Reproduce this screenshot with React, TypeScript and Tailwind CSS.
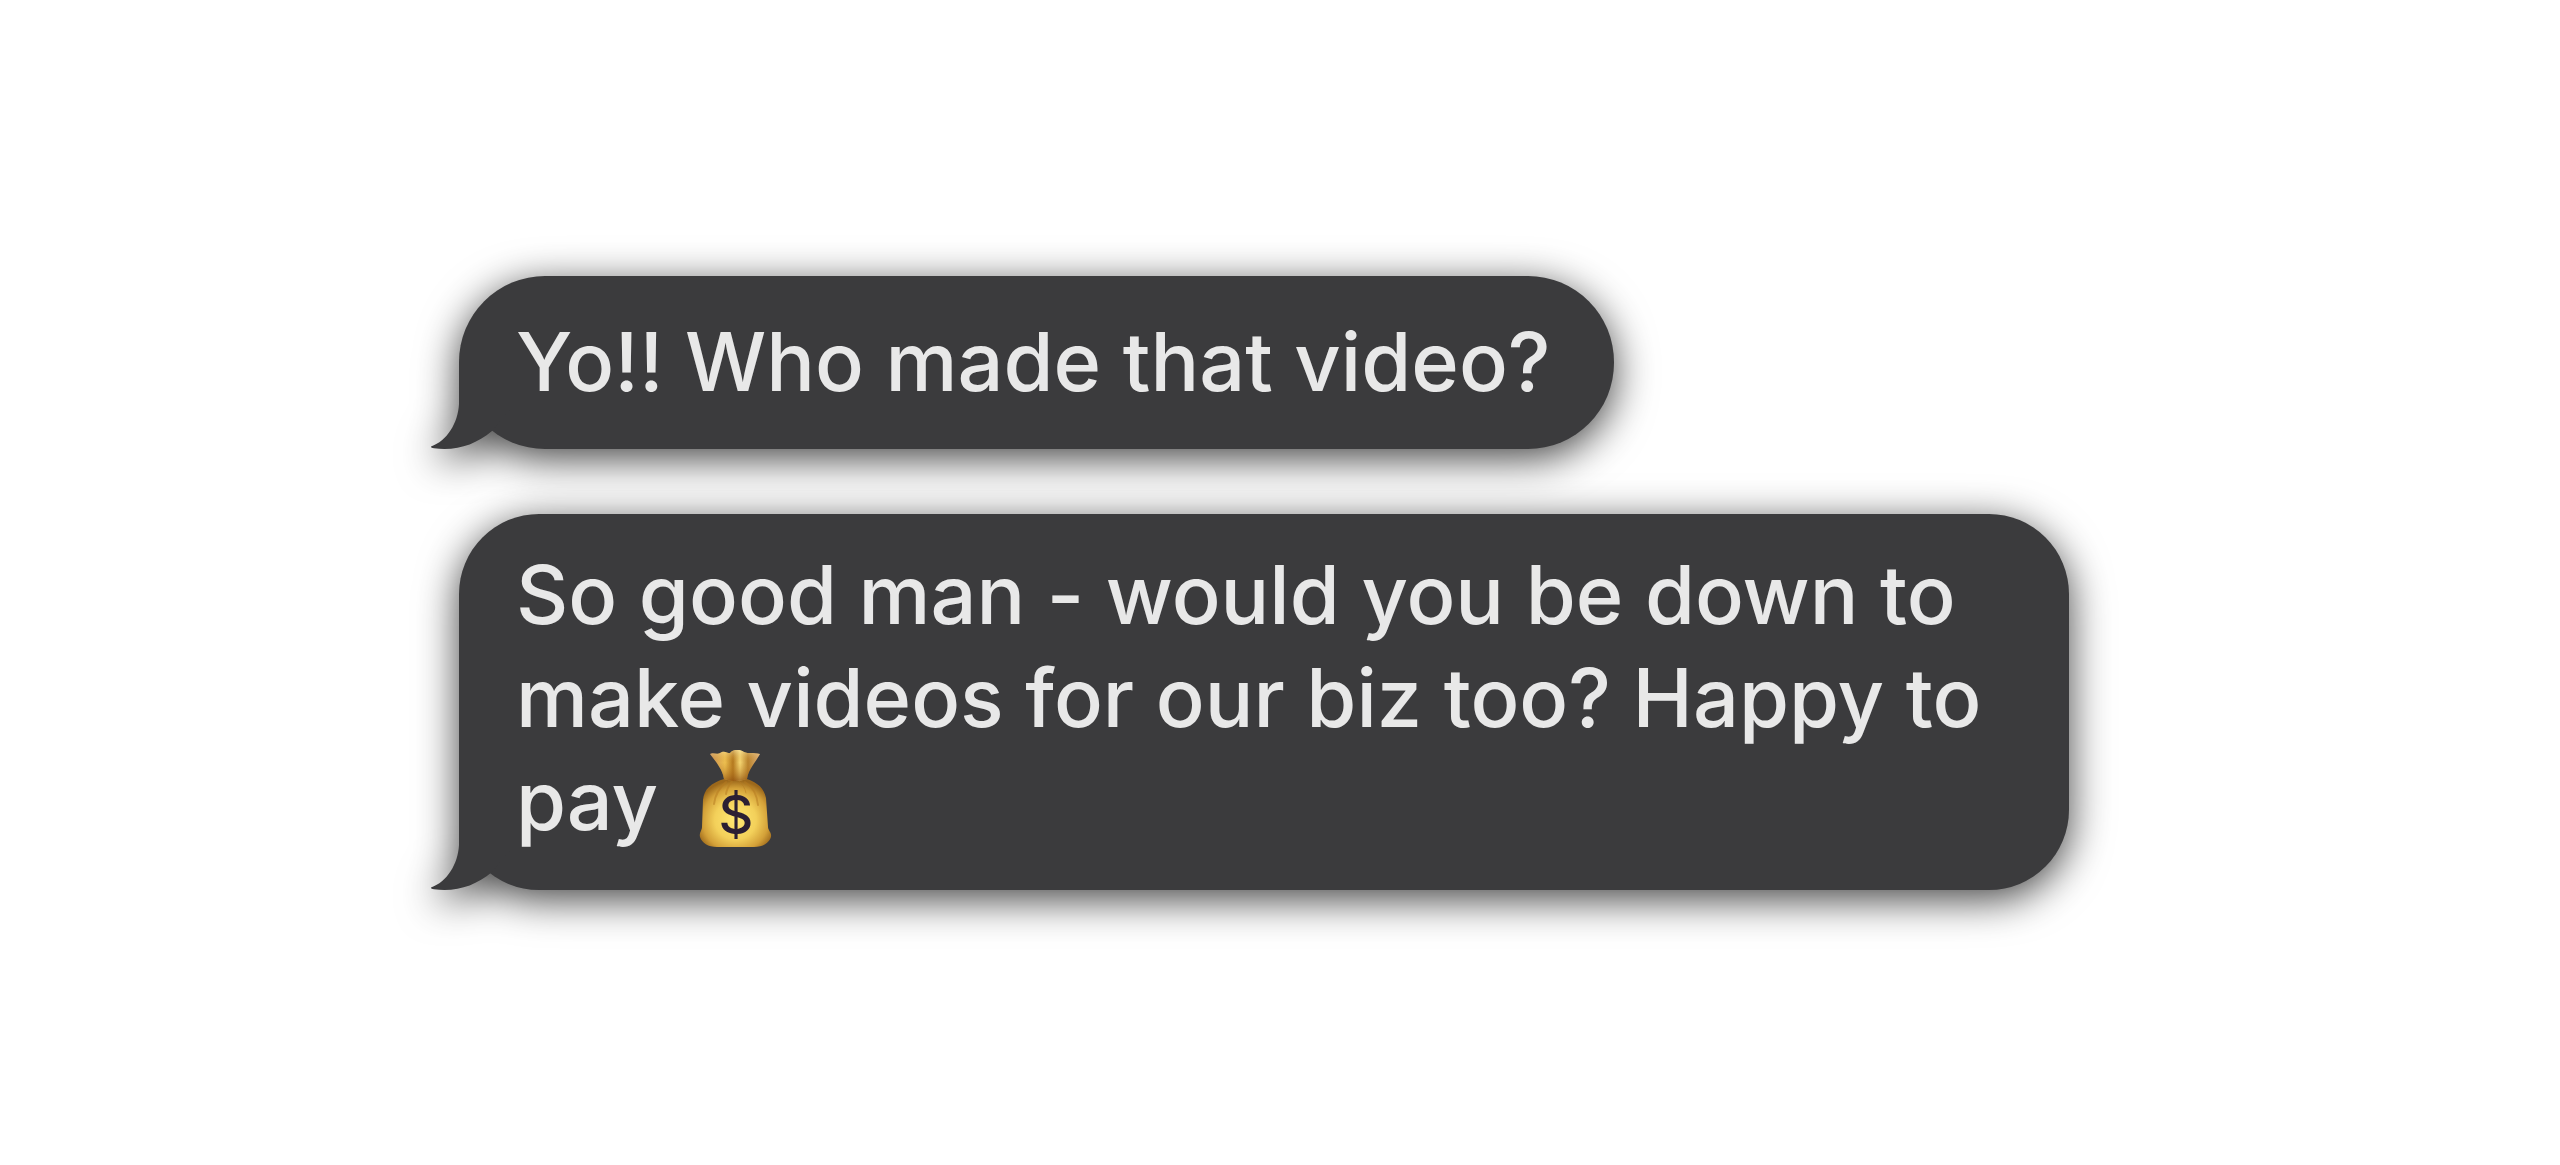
import clsx from "clsx";

type Message = {
    id: number;
    lines: string[];
    money?: boolean;
    className: string;
}

const MESSAGES: Message[] = [
    {
        id: 1,
        lines: ["Yo!! Who made that video?"],
        className: "w-[1155px] rounded-[86px] pt-[35px] pb-[35px]",
    },
    {
        id: 2,
        lines: ["So good man - would you be down to", "make videos for our biz too? Happy to", "pay"],
        money: true,
        className: "w-[1610px] rounded-[80px] pt-[30px] pb-[37px]",
    },
]

const Tail = () => {
    return (
        <svg
            viewBox="0 0 80 86"
            className="absolute bottom-0 -left-[29px] h-[86px] w-[80px] fill-[#3b3b3d]"
            aria-hidden="true"
        >
            <path d="M29 0 V41 C28 60 17 78 1 83.500 C1 84.500 2 85 4 85.300 C27 88 45 82 62 68 L80 46 V0 Z" />
        </svg>
    )
}

const MoneyBag = () => {
    return (
        <svg viewBox="0 0 73 97" className="ml-[41px] inline-block h-[97px] w-[73px] align-[-17px]" role="img" aria-label="Money bag">
            <defs>
                <radialGradient id="bag" cx="0.5" cy="0.6" r="0.58">
                    <stop offset="0" stopColor="#ffe873" />
                    <stop offset="0.5" stopColor="#f3d05a" />
                    <stop offset="0.8" stopColor="#d3a038" />
                    <stop offset="1" stopColor="#9c681b" />
                </radialGradient>
                <linearGradient id="ruffle" x1="0" x2="1" y1="0" y2="0">
                    <stop offset="0" stopColor="#c48a50" />
                    <stop offset="0.3" stopColor="#edbf50" />
                    <stop offset="0.46" stopColor="#b3781e" />
                    <stop offset="0.6" stopColor="#f5d672" />
                    <stop offset="0.76" stopColor="#b8822c" />
                    <stop offset="1" stopColor="#e0b078" />
                </linearGradient>
                <linearGradient id="shade" x1="0" x2="0" y1="0" y2="1">
                    <stop offset="0" stopColor="#fff0b8" stopOpacity="0.5" />
                    <stop offset="0.4" stopColor="#c88a28" stopOpacity="0" />
                    <stop offset="1" stopColor="#8a4a0c" stopOpacity="0.7" />
                </linearGradient>
            </defs>
            <path fill="url(#bag)" d="M25 29 C12 33 5 39 4 50 L3 77 C3 80 0 83 1 87 C3 93 9 97 18 97 H55 C64 97 70 93 72 87 C73 83 69 80 69 77 L67 48 C65 38 59 33 48 29 Z" />
            <g fill="none" stroke="#b57a20" strokeLinecap="round" opacity="0.5">
                <path strokeWidth="2" d="M27 32 C20 38 16 45 15 54" />
                <path strokeWidth="2" d="M33 31 C30 35 28 38 27 44" />
                <path strokeWidth="2" d="M46 32 C54 37 58 45 59 55" />
                <path strokeWidth="1" d="M40 31 C44 35 46 38 47 43" />
            </g>
            <path fill="url(#ruffle)" d="M11 4 C14 2 18 5 21 3 C25 0 28 3 31 3 C34 -1 41 -1 45 2 C50 4 54 2 61 4 C56 13 49 20 48 29 Q36 33 25 29 C24 20 17 12 11 4 Z" />
            <path fill="url(#shade)" d="M11 4 C14 2 18 5 21 3 C25 0 28 3 31 3 C34 -1 41 -1 45 2 C50 4 54 2 61 4 C56 13 49 20 48 29 Q36 33 25 29 C24 20 17 12 11 4 Z" />
            <text x="37" y="84" textAnchor="middle" className="fill-[#2b1f33] font-['Inter'] text-[54px] font-medium">$</text>
        </svg>
    )
}

const Bubble = ({message}: {message: Message}) => {
    return (
        <li
            className={clsx(
                "relative max-w-full bg-[#3b3b3d] pl-[57px] drop-shadow-[0_9px_21px_rgba(0,0,0,0.75)]",
                message.className
            )}
        >
            <Tail />
            <p className="relative text-[81px] leading-[103px] font-medium whitespace-nowrap text-[#e8e8e8]">
                {
                    message.lines.map((line, i) => (
                        <span key={line} className="block">
                            {line}
                            {message.money && i === message.lines.length - 1 && <MoneyBag />}
                        </span>
                    ))
                }
            </p>
        </li>
    )
}

const App = () => {
    return (
        <main className="flex min-h-screen flex-col justify-center bg-white pl-[459px] font-['Inter',sans-serif]">
            <ul className="flex flex-col items-start gap-[65px]">
                {
                    MESSAGES.map((message) => (
                        <Bubble key={message.id} message={message} />
                    ))
                }
            </ul>
        </main>
    )
}

export default App;
